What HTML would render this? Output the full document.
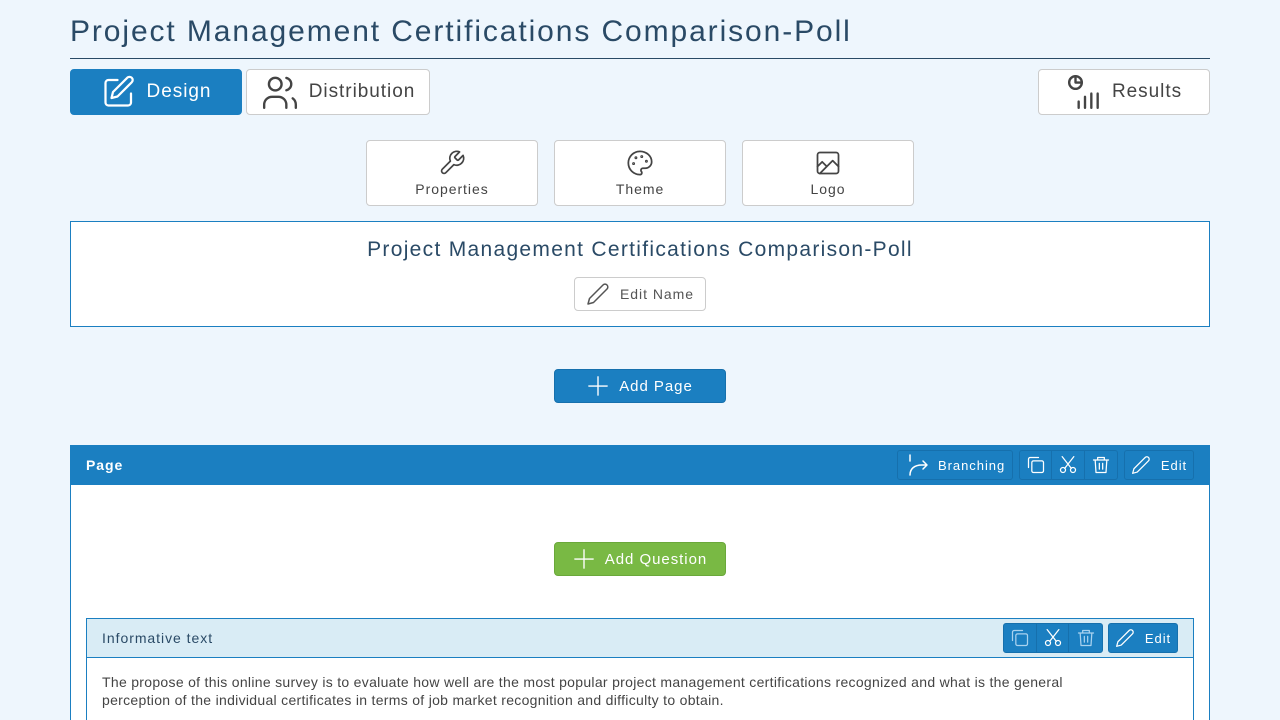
<!DOCTYPE html>
<html><head><style>
*{box-sizing:border-box;margin:0;padding:0}
html,body{width:1280px;height:720px;overflow:hidden}
body{background:#eef6fd;font-family:"Liberation Sans",sans-serif;color:#333;position:relative;letter-spacing:.06em}
.a{position:absolute}
.btn{position:absolute;background:#fff;border:1px solid #ccc;border-radius:4px;display:flex;align-items:center;justify-content:center}
svg{fill:none;stroke:currentColor;stroke-width:1.5;stroke-linecap:round;stroke-linejoin:round}
.sub{flex-direction:column;font-size:14px;color:#444}
.hb{position:absolute;border:1px solid #1670ad;border-radius:3px;display:flex;align-items:center;color:#fff;font-size:13px}
</style></head><body>
<div class="a" style="left:70px;top:15px;font-size:30px;color:#2a4a66;letter-spacing:1.9px;white-space:nowrap">Project Management Certifications Comparison-Poll</div>
<div class="a" style="left:70px;top:58px;width:1140px;height:1px;background:#2a4a66"></div>

<div class="btn" style="left:70px;top:69px;width:172px;height:46px;background:#1b7fc1;border-color:#1b7fc1;color:#fff;font-size:19px">
<svg width="36" height="36" viewBox="0 0 24 24" style="margin-right:10px"><path d="M11 4H5a2 2 0 0 0-2 2v13a2 2 0 0 0 2 2h13a2 2 0 0 0 2-2v-6"/><path d="M17.5 2.5a2.1 2.1 0 0 1 3 3L11 15l-4 1 1-4z"/></svg>Design</div>
<div class="btn" style="left:246px;top:69px;width:184px;height:46px;font-size:19px;color:#444">
<svg width="38" height="38" viewBox="0 0 24 24" style="margin-right:10px"><circle cx="9" cy="7" r="4"/><path d="M2 22v-2a5 5 0 0 1 5-5h4a5 5 0 0 1 5 5v2M16 3.1a4 4 0 0 1 0 7.8M20 16a5 5 0 0 1 2 4v2"/></svg>Distribution</div>
<div class="btn" style="left:1038px;top:69px;width:172px;height:46px;font-size:19px;color:#444">
<svg width="38" height="38" viewBox="0 0 24 24" style="margin-right:8px"><circle cx="6" cy="6" r="4"/><path d="M6 2v4h4M8 18v4M12 15v7M16 13v9M20 13v9"/></svg>Results</div>

<div class="btn sub" style="left:366px;top:140px;width:172px;height:66px"><svg width="28" height="28" viewBox="0 0 24 24"><path d="M14.7 6.3a1 1 0 0 0 0 1.4l1.6 1.6a1 1 0 0 0 1.4 0l3.8-3.8a6 6 0 0 1-7.9 7.9l-6.9 6.9a2.1 2.1 0 0 1-3-3l6.9-6.9a6 6 0 0 1 7.9-7.9z"/></svg><span style="margin-top:4px">Properties</span></div>
<div class="btn sub" style="left:554px;top:140px;width:172px;height:66px"><svg width="28" height="28" viewBox="0 0 24 24"><circle cx="13.5" cy="6.5" r=".5"/><circle cx="17.5" cy="10.5" r=".5"/><circle cx="8.5" cy="7.5" r=".5"/><circle cx="6.5" cy="12.5" r=".5"/><path d="M12 2a10 10 0 0 0 0 20c1 0 1.6-.7 1.6-1.6 0-.5-.2-.8-.4-1.1-.3-.3-.4-.7-.4-1.1 0-.9.7-1.7 1.6-1.7h2A5.6 5.6 0 0 0 22 11c0-5-4.5-9-10-9z"/></svg><span style="margin-top:4px">Theme</span></div>
<div class="btn sub" style="left:742px;top:140px;width:172px;height:66px"><svg width="28" height="28" viewBox="0 0 24 24"><rect x="3" y="3" width="18" height="18" rx="2"/><path d="M21 15l-5-5L5 21M3 15l4-4 4 4"/></svg><span style="margin-top:4px">Logo</span></div>

<div class="a" style="left:70px;top:221px;width:1140px;height:106px;background:#fff;border:1px solid #1b7fc1"></div>
<div class="a" style="left:70px;top:238px;width:1140px;text-align:center;font-size:21px;color:#2a4a66;letter-spacing:1.3px">Project Management Certifications Comparison-Poll</div>
<div class="btn" style="left:574px;top:277px;width:132px;height:34px;font-size:14px;color:#555"><svg width="24" height="24" viewBox="0 0 24 24" style="margin-right:10px"><path d="M17 3a2.8 2.8 0 0 1 4 4L7.5 20.5 2 22l1.5-5.5z"/></svg>Edit Name</div>

<div class="btn" style="left:554px;top:369px;width:172px;height:34px;background:#1b7fc1;border-color:#1670ad;color:#fff;font-size:15px"><svg width="22" height="22" viewBox="0 0 24 24" style="margin-right:10px"><path d="M12 2v20M2 12h20"/></svg>Add Page</div>

<div class="a" style="left:70px;top:445px;width:1140px;height:300px;background:#fff;border:1px solid #1b7fc1"></div>
<div class="a" style="left:70px;top:445px;width:1140px;height:40px;background:#1b7fc1"></div>
<div class="a" style="left:86px;top:457px;color:#fff;font-weight:bold;font-size:14px">Page</div>
<div class="hb" style="left:897px;top:450px;width:116px;height:30px"><svg width="24" height="24" viewBox="0 0 24 24" style="margin:0 8px 0 8px"><path d="M4 2v6M4 22c0-6 4-10 12-10h4M17 8l4 4-4 4"/></svg>Branching</div>
<div class="hb" style="left:1019px;top:450px;width:99px;height:30px"><div style="width:33px;height:100%;display:flex;justify-content:center;align-items:center;border-right:1px solid #1670ad"><svg width="20" height="20" viewBox="0 0 24 24"><rect x="7" y="7" width="14" height="14" rx="2"/><path d="M3 15V5a2 2 0 0 1 2-2h10"/></svg></div><div style="width:33px;height:100%;display:flex;justify-content:center;align-items:center;border-right:1px solid #1670ad"><svg width="20" height="20" viewBox="0 0 24 24"><circle cx="6" cy="18" r="3"/><circle cx="18" cy="18" r="3"/><path d="M8 16L19 2M16 16L5 2"/></svg></div><div style="width:33px;display:flex;justify-content:center"><svg width="20" height="20" viewBox="0 0 24 24"><path d="M3 6h18M8 6V3h8v3M5 6l1 15h12l1-15M10 10v7M14 10v7"/></svg></div></div>
<div class="hb" style="left:1124px;top:450px;width:70px;height:30px;justify-content:center"><svg width="20" height="20" viewBox="0 0 24 24" style="margin-right:10px"><path d="M17 3a2.8 2.8 0 0 1 4 4L7.5 20.5 2 22l1.5-5.5z"/></svg>Edit</div>

<div class="btn" style="left:554px;top:542px;width:172px;height:34px;background:#79b944;border-color:#6aa83a;color:#fff;font-size:15px"><svg width="22" height="22" viewBox="0 0 24 24" style="margin-right:10px"><path d="M12 2v20M2 12h20"/></svg>Add Question</div>

<div class="a" style="left:86px;top:618px;width:1108px;height:130px;background:#fff;border:1px solid #1b7fc1"></div>
<div class="a" style="left:86px;top:618px;width:1108px;height:40px;background:#d9ecf5;border:1px solid #1b7fc1"></div>
<div class="a" style="left:102px;top:630px;font-size:14px;color:#2a4a66">Informative text</div>
<div class="hb" style="left:1003px;top:623px;width:100px;height:30px;background:#1b7fc1"><div style="width:33px;height:100%;display:flex;justify-content:center;align-items:center;border-right:1px solid #1670ad"><svg width="20" height="20" viewBox="0 0 24 24" style="stroke:#a9d2ef"><rect x="7" y="7" width="14" height="14" rx="2"/><path d="M3 15V5a2 2 0 0 1 2-2h10"/></svg></div><div style="width:33px;height:100%;display:flex;justify-content:center;align-items:center;border-right:1px solid #1670ad"><svg width="20" height="20" viewBox="0 0 24 24"><circle cx="6" cy="18" r="3"/><circle cx="18" cy="18" r="3"/><path d="M8 16L19 2M16 16L5 2"/></svg></div><div style="width:33px;display:flex;justify-content:center"><svg width="20" height="20" viewBox="0 0 24 24" style="stroke:#a9d2ef"><path d="M3 6h18M8 6V3h8v3M5 6l1 15h12l1-15M10 10v7M14 10v7"/></svg></div></div>
<div class="hb" style="left:1108px;top:623px;width:70px;height:30px;background:#1b7fc1;justify-content:center"><svg width="20" height="20" viewBox="0 0 24 24" style="margin-right:10px"><path d="M17 3a2.8 2.8 0 0 1 4 4L7.5 20.5 2 22l1.5-5.5z"/></svg>Edit</div>
<div class="a" style="left:102px;top:673px;width:1025px;font-size:14px;line-height:18px;color:#444;letter-spacing:.3px">The propose of this online survey is to evaluate how well are the most popular project management certifications recognized and what is the general perception of the individual certificates in terms of job market recognition and difficulty to obtain.</div>
</body></html>
